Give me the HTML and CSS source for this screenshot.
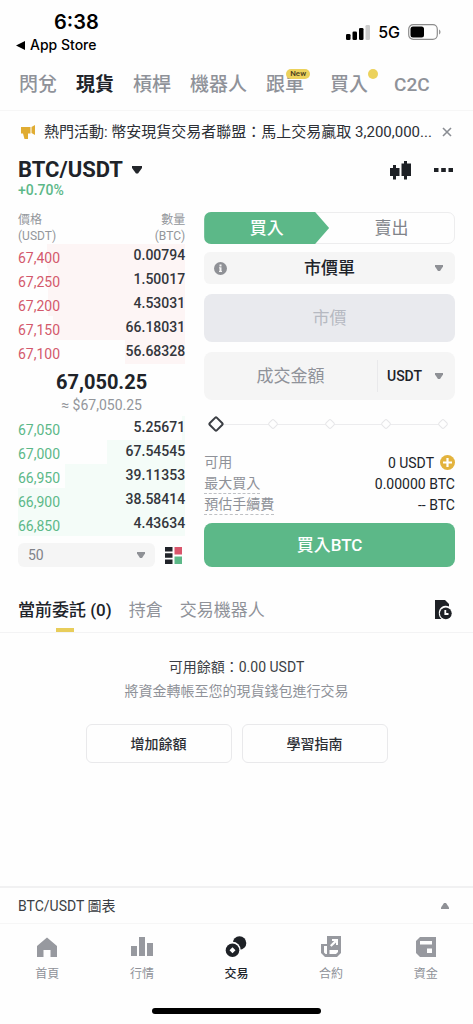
FILE: index.html
```html
<!DOCTYPE html>
<html lang="zh-Hant">
<head>
<meta charset="utf-8">
<meta name="viewport" content="width=device-width, initial-scale=1">
<title>BTC/USDT</title>
<link rel="stylesheet" href="styles.css">
</head>
<body>
<div class="app">
  <header class="status">
    <div class="status-left">
      <div class="clock">6:38</div>
      <a class="back" href="#"><svg width="9" height="9" viewBox="0 0 9 9"><path d="M0 4.500L9 0v9z"/></svg>App Store</a>
    </div>
    <div class="status-right">
      <svg width="24" height="16" viewBox="0 0 24 16"><rect x="0" y="10" width="4.500" height="6" rx="1.300"/><rect x="6.500" y="7.500" width="4.500" height="8.500" rx="1.300"/><rect x="13" y="4" width="4.500" height="12" rx="1.300"/><rect x="19.500" y="1" width="4.500" height="15" rx="1.300" fill="#ccc"/></svg>
      <span>5G</span>
      <svg width="33" height="16" viewBox="0 0 33 16"><rect x=".7" y=".7" width="28.600" height="14.600" rx="4.500" fill="none" stroke="#8c8c8c" stroke-width="1.200"/><rect x="2.500" y="2.500" width="13.500" height="11" rx="2.500"/><path d="M31 5.500c2 .8 2 4.200 0 5z" fill="#999"/></svg>
    </div>
  </header>

  <nav class="tabs">
    <a href="#">閃兌</a>
    <a href="#" class="active">現貨</a>
    <a href="#">槓桿</a>
    <a href="#">機器人</a>
    <a href="#" class="has-mark">跟單<span class="new">New</span></a>
    <a href="#" class="has-mark spaced">買入<span class="dot"></span></a>
    <a href="#" class="spaced">C2C</a>
  </nav>

  <div class="notice">
    <svg width="15" height="14" viewBox="0 0 15 14" fill="#e0ac32"><path d="M10.500 2L14 0v10l-3.500-2z"/><path d="M0 2h9.500v6.500H7V14H3.500L2 8.500H0z"/></svg>
    <span class="notice-text">熱門活動: 幣安現貨交易者聯盟：馬上交易贏取 3,200,000...</span>
    <button class="icon-button" aria-label="關閉"><svg width="10" height="10" viewBox="0 0 10 10" fill="none" stroke="#8a8d93" stroke-width="1.600"><path d="M1 1l8 8M9 1L1 9"/></svg></button>
  </div>

  <div class="pair">
    <div class="pair-main">
      <button class="pair-name">BTC/USDT<svg width="10" height="8" viewBox="0 0 10 8"><path d="M0 0h10v2L6 7.500H4L0 2z" fill="#23262b"/></svg></button>
      <div class="change">+0.70%</div>
    </div>
    <div class="pair-actions">
      <button class="icon-button" aria-label="K線"><svg width="21" height="19" viewBox="0 0 21 19" fill="#1e2126"><path d="M3 4h3v3h3.500v8H6v3.500H3V15H0V7h3zM14 0h3v2.500h4V15h-4v3.500h-3V15h-2.500V2.500H14z"/></svg></button>
      <button class="icon-button" aria-label="更多"><svg width="19" height="4" viewBox="0 0 19 4" fill="#1e2126"><path d="M0 0h4.500v4H0zM7.200 0h4.600v4H7.200zM14.500 0H19v4h-4.500z"/></svg></button>
    </div>
  </div>

  <main class="trade">
    <section class="book">
      <table class="levels">
        <thead><tr><th>價格<br>(USDT)</th><th>數量<br>(BTC)</th></tr></thead>
        <tbody class="asks">
          <tr style="--depth:83%"><td>67,400</td><td>0.00794</td></tr>
          <tr style="--depth:82%"><td>67,250</td><td>1.50017</td></tr>
          <tr style="--depth:82%"><td>67,200</td><td>4.53031</td></tr>
          <tr style="--depth:79%"><td>67,150</td><td>66.18031</td></tr>
          <tr style="--depth:36%"><td>67,100</td><td>56.68328</td></tr>
        </tbody>
      </table>
      <div class="last">67,050.25</div>
      <div class="fiat">≈ $67,050.25</div>
      <table class="levels">
        <tbody class="bids">
          <tr style="--depth:2%"><td>67,050</td><td>5.25671</td></tr>
          <tr style="--depth:47%"><td>67,000</td><td>67.54545</td></tr>
          <tr style="--depth:72%"><td>66,950</td><td>39.11353</td></tr>
          <tr style="--depth:100%"><td>66,900</td><td>38.58414</td></tr>
          <tr style="--depth:100%"><td>66,850</td><td>4.43634</td></tr>
        </tbody>
      </table>
      <div class="book-tools">
        <div class="picker step">
          <select aria-label="價格精度"><option>50</option></select>
          <svg class="arrow" width="8" height="6" viewBox="0 0 8 6"><path d="M0 0h8v1.500L5 6H3L0 1.500z"/></svg>
        </div>
        <button class="icon-button" aria-label="深度顯示"><svg width="17" height="17" viewBox="0 0 17 17"><path d="M0 0h7.500v4.500H0zM0 6.300h7.500v4.400H0zM0 12.500h7.500V17H0z" fill="#202329"/><path d="M9.500 0H17v7.500H9.500z" fill="#d9556b"/><path d="M9.500 9.500H17V17H9.500z" fill="#5cb888"/></svg></button>
      </div>
    </section>

    <form class="order">
      <div class="sides">
        <button type="button" class="side buy">買入</button>
        <button type="button" class="side">賣出</button>
      </div>
      <div class="picker kind">
        <svg class="info" width="13" height="13" viewBox="0 0 13 13"><circle cx="6.500" cy="6.500" r="6.500" fill="#8f9196"/><path d="M5.500 2.500h2v2h-2zM5 5.300h2.500V9H8v1H5V9h.5V6.300H5z" fill="#f5f5f5"/></svg>
        <select aria-label="訂單類型"><option>市價單</option></select>
        <svg class="arrow" width="8" height="6" viewBox="0 0 8 6"><path d="M0 0h8v1.500L5 6H3L0 1.500z"/></svg>
      </div>
      <input class="field price" aria-label="價格" placeholder="市價" disabled>
      <div class="field amount">
        <input aria-label="成交金額" placeholder="成交金額">
        <div class="picker unit">
          <select aria-label="幣種"><option>USDT</option></select>
          <svg class="arrow" width="8" height="6" viewBox="0 0 8 6"><path d="M0 0h8v1.500L5 6H3L0 1.500z"/></svg>
        </div>
      </div>
      <div class="slider">
        <div class="stops"><i></i><i></i><i></i><i></i><i></i></div>
        <input type="range" min="0" max="100" value="0" aria-label="比例">
      </div>
      <dl class="facts">
        <div><dt>可用</dt><dd>0 USDT<button type="button" class="icon-button" aria-label="增加"><svg width="15" height="15" viewBox="0 0 15 15"><circle cx="7.500" cy="7.500" r="7.500" fill="#e3b33d"/><path d="M6.400 3h2.200v3.400H12v2.200H8.600V12H6.400V8.600H3V6.400h3.400z" fill="#fff"/></svg></button></dd></div>
        <div><dt class="hint">最大買入</dt><dd>0.00000 BTC</dd></div>
        <div><dt class="hint">預估手續費</dt><dd>-- BTC</dd></div>
      </dl>
      <button type="button" class="submit">買入BTC</button>
    </form>
  </main>

  <nav class="order-tabs">
    <a href="#" class="active">當前委託 (0)</a>
    <a href="#">持倉</a>
    <a href="#">交易機器人</a>
    <button class="icon-button history" aria-label="歷史"><svg width="18" height="20" viewBox="0 0 18 20"><path d="M1 0h10l4 4v2.500A7 7 0 0 0 4.800 13c0 2.500 1 4.600 2.700 6H1z" fill="#1e2126"/><circle cx="11.800" cy="13.300" r="5.900" fill="#1e2126"/><path d="M11.300 10v4h3.200" fill="none" stroke="#fff" stroke-width="1.800"/></svg></button>
  </nav>

  <section class="empty">
    <p class="balance">可用餘額：0.00 USDT</p>
    <p>將資金轉帳至您的現貨錢包進行交易</p>
    <div class="empty-actions">
      <button>增加餘額</button>
      <button>學習指南</button>
    </div>
  </section>

  <footer class="bottom">
    <button class="chart-bar">BTC/USDT 圖表<svg width="8" height="6" viewBox="0 0 8 6"><path d="M0 6h8V4.500L5 0H3L0 4.500z" fill="#8f9196"/></svg></button>
    <nav class="dock">
      <a href="#"><svg viewBox="0 0 24 24"><path d="M12 2.500L22 11v11h-6.500v-7h-7v7H2V11z"/></svg>首頁</a>
      <a href="#"><svg viewBox="0 0 24 24"><path d="M1 11h6v10H1zM9 2h6v19H9zM17 8h6v13h-6z"/></svg>行情</a>
      <a href="#" class="active"><svg viewBox="0 0 24 24"><circle cx="15.500" cy="8" r="6.800"/><circle cx="8.500" cy="15" r="8.200" fill="#fefefe"/><circle cx="8.500" cy="15.200" r="6.800"/><path d="M8.500 12.200l3 3-3 3-3-3z" fill="#fefefe"/></svg>交易</a>
      <a href="#"><svg viewBox="0 0 24 24"><path fill-rule="evenodd" d="M8 1h14v17l-4 4H6l-4-4V9h6zM5 11v6.500L6.500 19H8v-8zM10.500 15v4H17l2-2v-2zM13 4v2h2.200L11 10.200l1.500 1.500L17 7.500V10h2V4z"/></svg>合約</a>
      <a href="#"><svg viewBox="0 0 24 24"><path fill-rule="evenodd" d="M6 2h16v20H6l-4-4V6zM6 6v3.500h12V6zM13 13.500v4.500h5v-4.500z"/></svg>資金</a>
    </nav>
    <div class="home-bar"></div>
  </footer>
</div>
</body>
</html>
```
FILE: styles.css
```css
* { box-sizing: border-box; }

body {
  margin: 0;
  background: #fefefe;
  color: #202329;
  font: 14px/20px Roboto, "Noto Sans CJK TC", sans-serif;
}

a { color: inherit; text-decoration: none; }
button, input, select { font: inherit; color: inherit; }
button { padding: 0; border: 0; background: none; cursor: pointer; }
svg { display: block; flex: none; }
p, dl, dd { margin: 0; }

.app { display: flex; flex-direction: column; min-height: 100vh; }
.icon-button { flex: none; }

.status {
  display: flex;
  justify-content: space-between;
  padding: 10px 32px 0 16px;
  color: #000;
  font-family: Inter, sans-serif;
}
.clock { padding-left: 38px; font-size: 20px; font-weight: 600; line-height: 24px; }
.back { display: flex; align-items: center; gap: 5px; font-size: 14px; font-weight: 500; line-height: 22px; }
.status-right { display: flex; align-items: center; gap: 8px; height: 44px; font-size: 16px; font-weight: 500; }

.tabs {
  display: flex;
  gap: 19px;
  padding: 16px 18px 12px 19px;
  border-bottom: 1px solid #f6f6f6;
  color: #8f9299;
  font-size: 19px;
  font-weight: 500;
  line-height: 26px;
  white-space: nowrap;
}
.tabs .active { color: #202329; font-weight: 700; }
.has-mark { position: relative; }
.spaced { margin-left: 7px; }
.new {
  position: absolute;
  top: -3px;
  right: -6px;
  padding: 0 4px;
  border-radius: 5px;
  background: #ecd25c;
  color: #4a4020;
  font-size: 8px;
  line-height: 10px;
}
.dot { position: absolute; top: -3px; right: -10px; width: 10px; height: 10px; border-radius: 50%; background: #ecd25c; }

.notice { display: flex; align-items: center; gap: 8px; padding: 11px 21px 11px 21px; }
.notice-text { flex: 1; min-width: 0; overflow: hidden; color: #2c2f35; font-size: 15px; white-space: nowrap; }

.pair { display: flex; justify-content: space-between; padding: 4px 20px 15px 18px; }
.pair-name { display: flex; align-items: center; gap: 9px; font-size: 22px; font-weight: 700; line-height: 26px; }
.change { color: #5cb888; font-weight: 500; line-height: 14px; }
.pair-actions { display: flex; align-items: center; gap: 23px; height: 26px; }

.trade { display: grid; grid-template-columns: minmax(0, 2fr) minmax(0, 3fr); gap: 19px; padding: 0 18px; }

.levels { width: 100%; border-collapse: collapse; }
.levels th { padding: 0; color: #93969b; font-size: 12px; font-weight: 400; line-height: 16px; text-align: left; }
.levels td { height: 24px; padding: 0; font-weight: 500; line-height: 20px; }
.levels td:first-child { padding-top: 4px; font-weight: 400; }
.levels td:last-child { padding-bottom: 2px; color: #33363c; }
.levels th:last-child, .levels td:last-child { text-align: right; }
.asks tr { background: linear-gradient(#fdf5f5, #fdf5f5) right / var(--depth) 100% no-repeat; }
.bids tr { background: linear-gradient(#f4fcf8, #f4fcf8) right / var(--depth) 100% no-repeat; }
.asks td:first-child { color: #d3596c; }
.bids td:first-child { color: #5cb888; }
.last { padding-top: 4px; font-size: 20px; font-weight: 700; line-height: 28px; text-align: center; }
.fiat { padding-bottom: 2px; color: #93969b; line-height: 18px; text-align: center; }

.picker { position: relative; border-radius: 6px; background: #f5f5f5; }
.picker select { width: 100%; border: 0; background: none; appearance: none; outline: 0; }
.picker .arrow { position: absolute; top: 50%; right: 12px; margin-top: -3px; fill: #8f9196; pointer-events: none; }
.book-tools { display: flex; align-items: center; gap: 10px; padding: 7px 3px 0 0; }
.step { flex: 1; }
.step select { display: block; height: 24px; padding: 0 10px; color: #808389; }
.step .arrow { right: 10px; }

.order { display: flex; flex-direction: column; }
.sides { display: flex; border: 1px solid #ededee; border-radius: 7px; font-size: 17px; }
.side { flex: 1; height: 30px; color: #808389; }
.side.buy {
  margin: -1px 0 -1px -1px;
  height: 32px;
  border-radius: 7px 0 0 7px;
  background: #5cb888;
  color: #fff;
  font-weight: 500;
  clip-path: polygon(0 0, calc(100% - 14px) 0, 100% 50%, calc(100% - 14px) 100%, 0 100%);
}
.kind { margin: 8px 0 10px; }
.kind select { display: block; height: 32px; padding: 0 30px; font-size: 17px; font-weight: 500; text-align-last: center; }
.info { position: absolute; top: 10px; left: 10px; }
.field { height: 48px; border: 0; border-radius: 8px; background: #f5f5f5; font-size: 17px; }
.price { width: 100%; background: #e9eaee; text-align: center; }
.price::placeholder { color: #b6b9c1; }
.amount { display: flex; align-items: center; margin-top: 10px; }
.amount input { flex: 1; min-width: 0; border: 0; background: none; outline: 0; text-align: center; }
.amount input::placeholder { color: #8f9299; }
.unit { width: 78px; border-left: 1px solid #e9e9eb; border-radius: 0; }
.unit select { height: 32px; padding: 0 9px; font-size: 14px; font-weight: 500; }

.slider { position: relative; height: 16px; margin: 16px 6px 20px; }
.stops {
  position: absolute;
  inset: 0 2px;
  display: flex;
  align-items: center;
  justify-content: space-between;
  background: linear-gradient(#ececee, #ececee) center / 100% 1px no-repeat;
}
.stops i { width: 8px; height: 8px; border: 1px solid #e6e6e8; border-radius: 2px; background: #fefefe; transform: rotate(45deg); }
.slider input { position: relative; display: block; width: 100%; height: 16px; margin: 0; background: none; appearance: none; }
.slider input::-webkit-slider-thumb {
  width: 12px;
  height: 12px;
  border: 2px solid #3b3e44;
  border-radius: 2px;
  background: #fefefe;
  appearance: none;
  transform: rotate(45deg);
}

.facts div { display: flex; justify-content: space-between; height: 21px; line-height: 20px; }
.facts dt { color: #8f9299; }
.facts .hint { border-bottom: 1px dashed #bfc1c5; }
.facts dd { display: flex; align-items: center; gap: 6px; font-variant-ligatures: none; }
.submit { height: 44px; margin-top: 8px; border-radius: 8px; background: #5cb888; color: #fff; font-size: 17px; font-weight: 500; }

.order-tabs {
  display: flex;
  gap: 17px;
  padding: 31px 21px 0 18px;
  border-bottom: 1px solid #f3f3f4;
  color: #8f9299;
  font-size: 17px;
  line-height: 24px;
}
.order-tabs a { padding-bottom: 10px; }
.order-tabs .active {
  background: linear-gradient(#e8cd5a, #e8cd5a) bottom / 18px 4px no-repeat;
  color: #202329;
  font-weight: 500;
}
.history { height: 24px; margin-left: auto; }

.empty { padding: 22px 18px; color: #8f9299; line-height: 24px; text-align: center; }
.balance { color: #3b3e44; }
.empty-actions { display: flex; justify-content: center; gap: 10px; padding-top: 21px; }
.empty-actions button {
  width: 146px;
  height: 39px;
  border: 1px solid #e9e9eb;
  border-radius: 6px;
  color: #2c2f35;
  font-weight: 500;
}

.bottom { margin-top: auto; border-top: 2px solid #f1f1f2; }
.chart-bar {
  display: flex;
  align-items: center;
  justify-content: space-between;
  width: 100%;
  height: 36px;
  padding: 0 24px 0 18px;
  border-bottom: 1px solid #f6f6f6;
  color: #3b3e44;
}
.dock { display: flex; padding-top: 11px; color: #8f9299; fill: #97999f; font-size: 12px; line-height: 18px; }
.dock a { display: flex; flex: 1; flex-direction: column; align-items: center; gap: 6px; }
.dock svg { width: 24px; height: 24px; }
.dock .active { color: #202329; fill: #1e2126; font-weight: 500; }
.home-bar { width: 169px; height: 6px; margin: 25px auto 10px; border-radius: 3px; background: #000; }
```
